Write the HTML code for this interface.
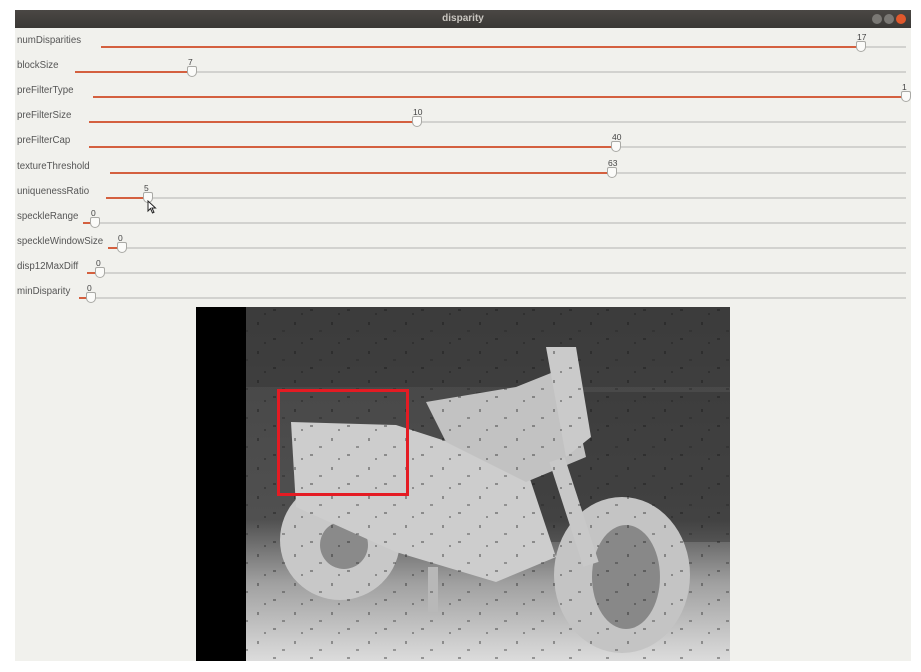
<!DOCTYPE html>
<html><head><meta charset="utf-8"><style>
body{margin:0;width:921px;height:672px;background:#fff;position:relative;overflow:hidden;font-family:"Liberation Sans","DejaVu Sans",sans-serif}
#win{position:absolute;left:15px;top:10px;width:896px;height:651px;background:#f1f1ed}
#tb{position:absolute;left:0;top:0;width:896px;height:18px;background:linear-gradient(#4a4744,#3a3835);color:#c9c6c0;font-size:10px;font-weight:bold;text-align:center;line-height:17px}
.b{position:absolute;top:4px;width:10px;height:10px;border-radius:50%;background:#7a7874}
.lab{position:absolute;left:2px;font-size:9.7px;color:#555}
.tr{position:absolute;height:2px;background:#d2d2cf;right:4px}
.fl{position:absolute;height:2px;background:#d4603f}
.th{position:absolute;width:8px;height:9px;background:#fbfbf9;border:1px solid #a9a9a5;border-radius:2px 2px 5px 5px}
.v{position:absolute;font-size:8.5px;color:#444}
</style></head><body>
<div id="win">
<div id="tb">disparity
<div class="b" style="left:857px"></div><div class="b" style="left:869px"></div><div class="b" style="left:881px;background:#e0582c"></div></div>
</div>
<div id="rows"></div>
<svg style="position:absolute;left:196px;top:307px" width="534" height="354" viewBox="0 0 534 354">
<defs>
<linearGradient id="g" x1="0" y1="0" x2="0" y2="1">
<stop offset="0" stop-color="#444"/><stop offset="0.6" stop-color="#505050"/><stop offset="0.78" stop-color="#a0a0a0"/><stop offset="1" stop-color="#dcdcdc"/></linearGradient>
<pattern id="sp" width="37" height="29" patternUnits="userSpaceOnUse">
<rect x="3" y="2" width="3" height="2" fill="#111"/><rect x="24" y="15" width="2" height="3" fill="#111"/><rect x="12" y="23" width="3" height="2" fill="#222"/><rect x="31" y="6" width="2" height="2" fill="#1a1a1a"/></pattern>
</defs>
<rect width="534" height="354" fill="url(#g)"/>
<rect x="50" y="0" width="484" height="80" fill="#333" opacity="0.5"/>
<rect x="280" y="85" width="254" height="150" fill="#2e2e2e" opacity="0.4"/>
<ellipse cx="144" cy="233" rx="60" ry="60" fill="#c8c8c8"/>
<ellipse cx="148" cy="238" rx="24" ry="24" fill="#8a8a8a"/>
<ellipse cx="426" cy="268" rx="68" ry="78" fill="#c4c4c4"/>
<ellipse cx="430" cy="270" rx="34" ry="52" fill="#888"/>
<path d="M95 115 L200 118 L330 160 L360 250 L300 275 L200 245 L100 200 Z" fill="#cdcdcd"/>
<path d="M230 95 L320 80 L370 60 L390 150 L330 175 L250 135 Z" fill="#c2c2c2"/>
<path d="M350 40 L380 40 L395 130 L370 150 Z" fill="#cacaca"/>
<rect x="232" y="260" width="10" height="45" fill="#b8b8b8"/>
<rect x="370" y="150" width="16" height="110" fill="#c8c8c8" transform="rotate(-18 378 205)"/>
<rect x="50" width="484" height="354" fill="url(#sp)" opacity="0.35"/>
<rect x="0" width="50" height="354" fill="#000"/>
</svg>
<div style="position:absolute;left:277px;top:389px;width:126px;height:101px;border:3px solid #e41b23"></div>
<script>
var r=[["numDisparities",101,860,17],["blockSize",75,191,7],["preFilterType",93,905,1],["preFilterSize",89,416,10],["preFilterCap",89,615,40],["textureThreshold",110,611,63],["uniquenessRatio",106,147,5],["speckleRange",83,94,0],["speckleWindowSize",108,121,0],["disp12MaxDiff",87,99,0],["minDisparity",79,90,0]];
var h="";
r.forEach(function(a,i){var y=46+i*25.1;
h+='<div class="lab" style="left:17px;top:'+(y-11)+'px">'+a[0]+'</div>';
h+='<div class="tr" style="left:'+a[1]+'px;top:'+y+'px;width:'+(906-a[1])+'px"></div>';
h+='<div class="fl" style="left:'+a[1]+'px;top:'+y+'px;width:'+(a[2]-a[1])+'px"></div>';
h+='<div class="th" style="left:'+(a[2]-4)+'px;top:'+(y-5)+'px"></div>';
h+='<div class="v" style="left:'+(a[2]-3)+'px;top:'+(y-14)+'px">'+a[3]+'</div>';});
document.getElementById("rows").innerHTML=h;
</script>
<svg style="position:absolute;left:147px;top:200px" width="10" height="14"><path d="M1 1 L1 11 L3.5 8.5 L5.5 13 L7 12.3 L5 8 L8.5 8 Z" fill="#fff" stroke="#222" stroke-width="1"/></svg>
</body></html>
